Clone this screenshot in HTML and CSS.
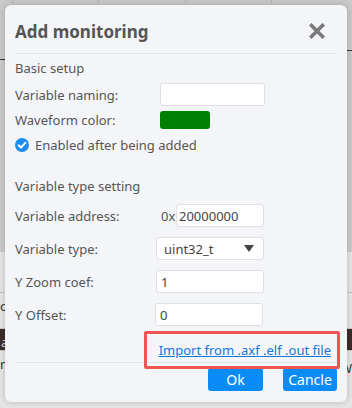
FILE: index.html
```html
<!DOCTYPE html>
<html>
<head>
<meta charset="utf-8">
<link rel="stylesheet" href="styles.css">
</head>
<body>
<div class="screen">
  <div class="backdrop-top">
    <div class="grid-line g1"></div>
    <div class="grid-line g2"></div>
    <div class="grid-line g3"></div>
    <div class="grid-line g4"></div>
    <div class="axis axis-left"></div>
    <div class="axis axis-right"></div>
  </div>
  <div class="backdrop-bottom">
    <div class="table-row r1"><span class="cell-text">or</span></div>
    <div class="table-row dark"><span class="cell-text light">a</span></div>
    <div class="table-row r3"><span class="cell-text">ne</span><span class="cell-text right">W</span></div>
  </div>

  <div class="modal">
    <div class="modal-header">
      <span class="modal-title">Add monitoring</span>
      <svg class="close" width="16" height="16" viewBox="0 0 16 16"><path d="M2.5 2.5 L13.5 13.5 M13.5 2.5 L2.5 13.5" stroke="#7a7a7a" stroke-width="3.6" stroke-linecap="square"/></svg>
    </div>
    <div class="modal-body">
      <div class="section-title first">Basic setup</div>
      <div class="row naming">
        <span class="label">Variable naming:</span>
        <span class="input w-naming"></span>
      </div>
      <div class="row color-row">
        <span class="label">Waveform color:</span>
        <span class="swatch"></span>
      </div>
      <div class="row check-row">
        <svg class="check" width="14" height="14" viewBox="0 0 14 14"><circle cx="7" cy="7" r="7" fill="#1a8cf2"/><path d="M3.6 7.2 L6 9.5 L10.5 4.7" fill="none" stroke="#fff" stroke-width="1.9" stroke-linecap="round" stroke-linejoin="round"/></svg>
        <span class="check-text">Enabled after being added</span>
      </div>
      <div class="section-title second">Variable type setting</div>
      <div class="row field address">
        <span class="label">Variable address:</span>
        <span class="prefix">0x</span>
        <span class="input w-address">20000000</span>
      </div>
      <div class="row field">
        <span class="label">Variable type:</span>
        <span class="input select">uint32_t<svg class="caret" width="10" height="7" viewBox="0 0 10 7"><path d="M0 0 L10 0 L5 7 Z" fill="#444"/></svg></span>
      </div>
      <div class="row field">
        <span class="label">Y Zoom coef:</span>
        <span class="input w-wide">1</span>
      </div>
      <div class="row field">
        <span class="label">Y Offset:</span>
        <span class="input w-wide shift">0</span>
      </div>
      <div class="link-row"><a class="import-link">Import from .axf .elf .out file</a></div>
    </div>
    <div class="modal-footer">
      <span class="btn ok">Ok</span>
      <span class="btn">Cancle</span>
    </div>
    <div class="highlight"></div>
  </div>
</div>
</body>
</html>
```

FILE: styles.css
```css
* { box-sizing: border-box; }
html, body { margin: 0; padding: 0; }
body {
  width: 352px;
  height: 408px;
  overflow: hidden;
  font-family: "Noto Sans", "Open Sans", sans-serif;
  color: #555;
}
.screen {
  position: relative;
  width: 352px;
  height: 408px;
  background: #e4e4e4;
}
.backdrop-top {
  position: relative;
  height: 252px;
  background: #c9c9c9;
}
.grid-line {
  position: absolute;
  top: 0;
  bottom: 0;
  width: 0;
  border-left: 1px dashed #b4b4b4;
}
.g1 { left: 12px; }
.g2 { left: 98px; }
.g3 { left: 185px; }
.g4 { left: 271px; }
.axis {
  position: absolute;
  height: 1px;
  background: #333;
}
.axis-left { left: 0; width: 20px; top: 59px; }
.axis-right { right: 0; width: 20px; top: 50px; }
.backdrop-bottom {
  padding-top: 40px;
}
.table-row {
  height: 26px;
  border-top: 1px solid #c4c4c4;
  position: relative;
  font-size: 13px;
}
.table-row.dark { background: #3c2c2a; height: 22px; margin-top: 10px; }
.cell-text { position: absolute; left: 0; top: 4px; color: #333; }
.cell-text.light { color: #ddd; left: 1px; }
.cell-text.right { left: auto; right: 0; top: 8px; }

.modal {
  position: absolute;
  left: 5px;
  top: 5px;
  width: 342px;
  height: 397px;
  background: #f4f5f9;
  border-radius: 6px;
  box-shadow: 0 0 6px rgba(0,0,0,0.18);
  padding: 0 10px;
}
.modal-header {
  height: 49px;
  border-bottom: 1px solid #e3e4e8;
  display: flex;
  align-items: center;
  justify-content: space-between;
  padding-top: 4px;
}
.modal-title {
  font-size: 17px;
  font-weight: 700;
  color: #555;
}
.close { margin-right: 12px; }
.modal-body {
  display: flex;
  flex-direction: column;
  font-size: 13px;
}
.section-title { line-height: 28px; height: 28px; }
.section-title.second { margin-top: 21px; line-height: 24px; height: 24px; }
.row {
  display: flex;
  align-items: center;
}
.label { width: 145px; flex: none; }
.naming { height: 23px; margin-top: 1px; }
.color-row { height: 18px; margin-top: 5px; }
.check-row { height: 16px; margin-top: 8px; }
.check { flex: none; margin-right: 6px; }
.field { height: 23px; margin-top: 10px; }
.field.address { margin-top: 6px; }
.input {
  display: flex;
  align-items: center;
  height: 23px;
  background: #fff;
  border: 1px solid #dedfe3;
  border-radius: 3px;
  padding: 0 4px;
  color: #444;
  font-size: 13px;
}
.w-naming { width: 105px; }
.swatch {
  width: 50px;
  height: 18px;
  background: #008000;
  border-radius: 3px;
}
.prefix { margin-left: 1px; width: 15px; color: #555; }
.w-address { width: 88px; padding-left: 2px; }
.select {
  width: 108px;
  margin-left: -4px;
  padding-left: 7px;
  padding-right: 9px;
  justify-content: space-between;
}
.w-wide { width: 108px; margin-left: -4px; }
.w-wide.shift { margin-left: -5px; }
.link-row {
  margin-top: 14px;
  height: 20px;
  line-height: 20px;
  display: flex;
  justify-content: flex-end;
  padding-right: 6px;
}
.import-link {
  color: #1677d8;
  text-decoration: underline;
  font-size: 13px;
}
.modal-footer {
  margin-top: 2px;
  border-top: 1px solid #e3e4e8;
  display: flex;
  justify-content: flex-end;
  gap: 20px;
  padding-top: 5px;
}
.btn {
  height: 23px;
  width: 54px;
  background: #0a8cf8;
  color: #fff;
  border-radius: 3px;
  display: flex;
  align-items: center;
  justify-content: center;
  font-size: 14px;
}
.btn.ok { width: 55px; }
.highlight {
  position: absolute;
  left: 139px;
  top: 326px;
  width: 196px;
  height: 38px;
  border: 3px solid #f25454;
  border-radius: 2px;
}
```
